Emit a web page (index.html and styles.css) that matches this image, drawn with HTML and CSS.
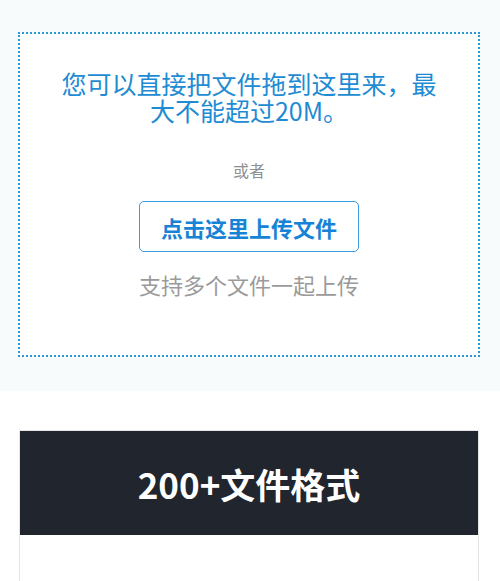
FILE: index.html
```html
<!DOCTYPE html>
<html lang="zh">
<head>
<meta charset="utf-8">
<link rel="stylesheet" href="styles.css">
</head>
<body>
<section class="upload">
  <div class="dropzone">
    <h2 class="drop-title">您可以直接把文件拖到这里来，最大不能超过20M。</h2>
    <div class="or">或者</div>
    <button class="pick">点击这里上传文件</button>
    <div class="multi">支持多个文件一起上传</div>
  </div>
</section>
<section class="formats">
  <div class="card">
    <div class="card-head">200+文件格式</div>
    <div class="card-body"></div>
  </div>
</section>
</body>
</html>
```
FILE: styles.css
```css
html, body {
  margin: 0;
  padding: 0;
  background: #ffffff;
  font-family: "Noto Sans CJK SC", "Noto Sans", sans-serif;
}
.upload {
  background: #f8fbfb;
  padding: 32px 20px 34px 18px;
}
.dropzone {
  background: #ffffff;
  border: 2px dotted #2a97d8;
  height: 321px;
  box-sizing: content-box;
  display: flex;
  flex-direction: column;
  align-items: center;
}
.drop-title {
  margin: 36px auto 0;
  max-width: 390px;
  font-size: 25px;
  line-height: 27px;
  font-weight: 400;
  color: #1e8bd3;
  text-align: center;
}
.or {
  margin-top: 34px;
  font-size: 16px;
  line-height: 24px;
  color: #8f8f8f;
}
.pick {
  margin-top: 19px;
  width: 220px;
  height: 51px;
  background: #ffffff;
  border: 1.5px solid #3c9be0;
  border-radius: 5px;
  font-family: "Noto Sans CJK SC", sans-serif;
  font-size: 22px;
  font-weight: 700;
  color: #1683d6;
  padding: 0;
  letter-spacing: 0;
}
.multi {
  margin-top: 17px;
  font-size: 22px;
  line-height: 30px;
  color: #9a9a9a;
}
.formats {
  padding: 39px 21px 0 19px;
}
.card {
  border: 1px solid #e4e4e4;
}
.card-head {
  background: #21252d;
  height: 104px;
  display: flex;
  align-items: center;
  justify-content: center;
  color: #ffffff;
  font-size: 35px;
  font-weight: 700;
}
.card-body {
  height: 60px;
  background: #ffffff;
}
```
